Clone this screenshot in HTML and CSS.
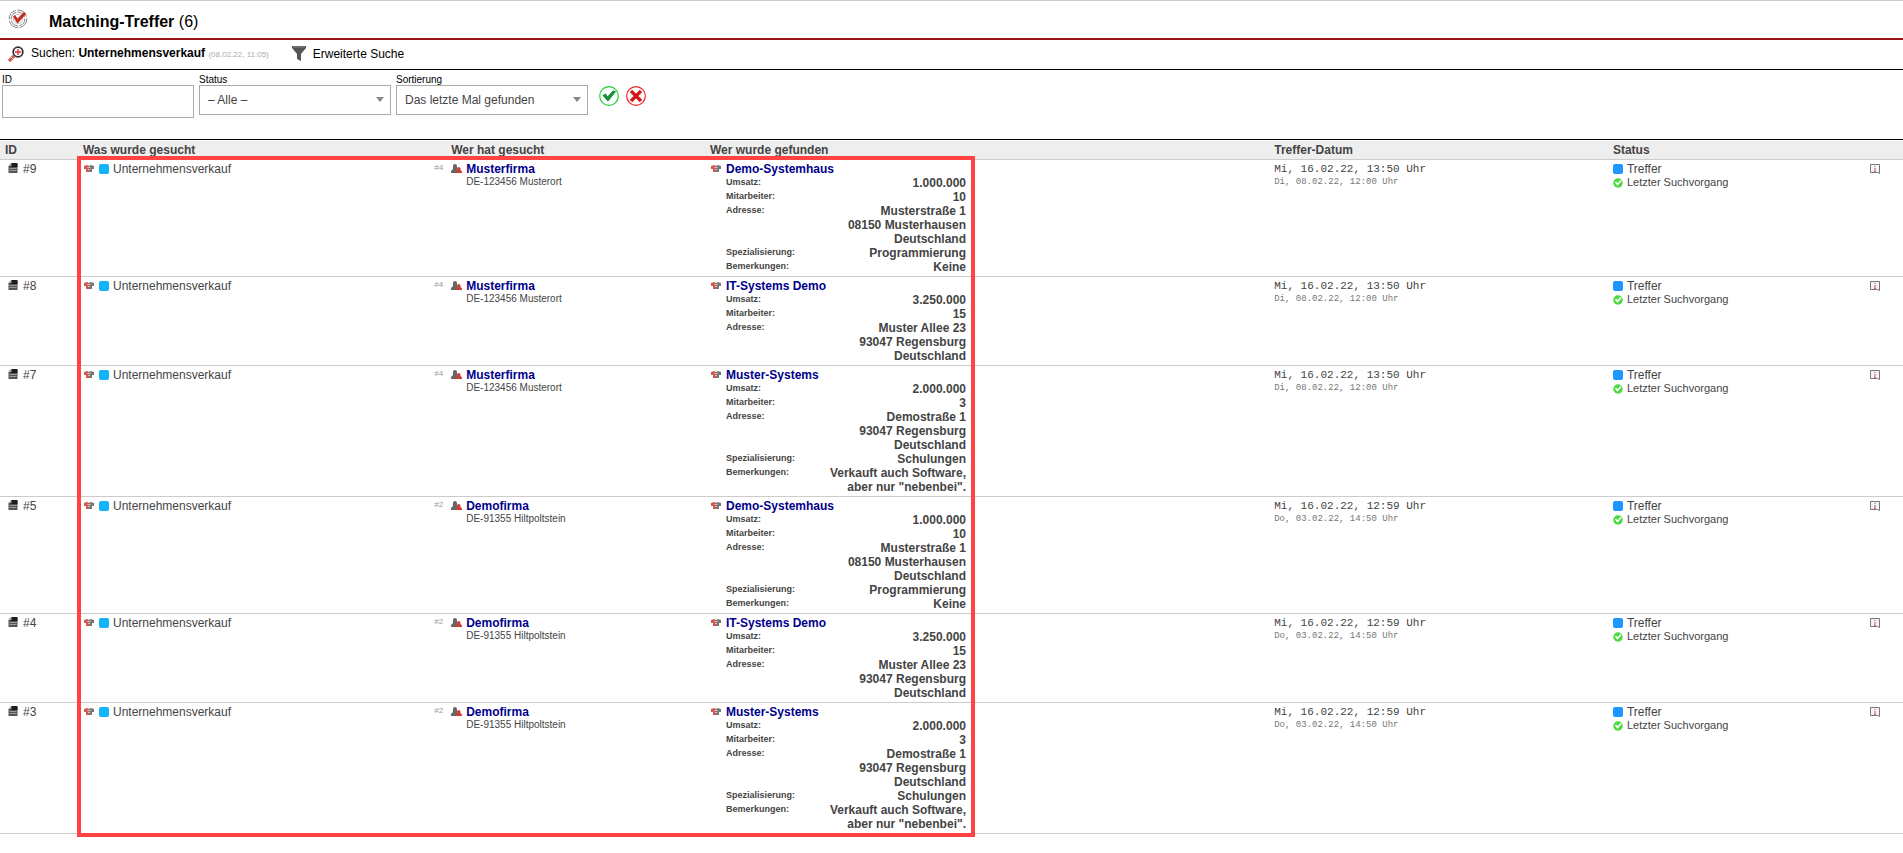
FILE: index.html
```html
<!DOCTYPE html>
<html lang="de">
<head>
<meta charset="utf-8">
<title>Matching-Treffer</title>
<link rel="stylesheet" href="styles.css">
</head>
<body>
<svg class="sprite" aria-hidden="true">
  <symbol id="doc" viewBox="0 0 9 10"><path d="M3 0h5q1 0 1 1v9H0V3z" fill="#555"/><path d="M3 0h5q1 0 1 1v3H2z" fill="#1c1c1c"/><path d="M0 3l3-3v3z" fill="#aaa"/><path d="M1 5.500h7M1 7.500h7" stroke="#999"/></symbol>
  <symbol id="shake" viewBox="0 0 10 8"><path d="M0 1l3-1 2 1v6H2V4H0z" fill="#cf5a50"/><path d="M5 1l2-1 3 1v3H8v3H5z" fill="#777"/><path d="M3.500 2.500h3M4 4.500h2" stroke="#ddd" stroke-width=".8"/></symbol>
  <symbol id="people" viewBox="0 0 11 10"><path d="M2 2q0-2 2-2t2 2v2q0 1 1 2v3H0V7l2-2z" fill="#666"/><path d="M6 4.500Q6 3 7.700 3t1.800 1.500V6L11 7.500V9H5V7.500L6.500 6z" fill="#d23d30"/></symbol>
  <symbol id="ok" viewBox="0 0 10 10"><circle cx="5" cy="5" r="4.700" fill="#4bd93f"/><path d="M2.500 4l2 2.500L8 2.500" fill="none" stroke="#fff" stroke-width="1.600"/></symbol>
  <symbol id="info" viewBox="0 0 10 10"><path d="M.500.500h9v9l-2-1h-7z" fill="#f4f4f4" stroke="#777"/><path d="M5 2v1M5 4v4M4 7.500h2" stroke="#d66" stroke-width="1.200"/></symbol>
</svg>

<header class="head">
  <svg class="logo" viewBox="0 0 20 20"><g fill="none" stroke="#777" stroke-width=".9"><circle cx="10" cy="10" r="8.800" stroke-dasharray="12 1.500"/><circle cx="10" cy="10" r="6.800" stroke-dasharray="9 1.500"/><circle cx="10" cy="10" r="4.500" stroke="#bbb"/></g><path d="M5 7.500l2-1.500 2.500 3.500L16 3l2 2-8 9H9z" fill="#c8281e"/></svg>
  <h1>Matching-Treffer <span>(6)</span></h1>
</header>

<nav class="tools">
  <a href="#" class="tool"><svg class="find" viewBox="0 0 16 16"><path d="M6 10l-5 5" stroke="#cf5a50" stroke-width="3.200"/><path d="M3 11l2 2" stroke="#fff" stroke-width=".7"/><circle cx="10" cy="6" r="4.800" fill="#fff" stroke="#333" stroke-width="1.800"/><path d="M10 3v6M7 6h6" stroke="#d33" stroke-width="1.400"/></svg><span>Suchen: <b>Unternehmensverkauf</b> <small>(08.02.22, 11:05)</small></span></a>
  <a href="#" class="tool"><svg class="funnel" viewBox="0 0 14 16"><path d="M0 0h14v2L9 8v7l-4-2V8L0 2z" fill="#555"/><path d="M1 1h12" stroke="#888"/></svg><span>Erweiterte Suche</span></a>
</nav>

<form class="filter">
  <div class="field"><label for="fid">ID</label><input id="fid" type="text"></div>
  <div class="field"><label for="fst">Status</label><div class="pick"><select id="fst"><option>– Alle –</option></select></div></div>
  <div class="field"><label for="fso">Sortierung</label><div class="pick"><select id="fso"><option>Das letzte Mal gefunden</option></select></div></div>
  <div class="actions">
    <button type="submit" aria-label="Anwenden"><svg viewBox="0 0 20 20"><circle cx="10" cy="10" r="9.300" fill="#fff" stroke="#2c3" stroke-width="1.200"/><path d="M4 9.500l2.500-1.500 2 3L14 5l2.500.500L9 15z" fill="#189038" stroke="#189038"/></svg></button>
    <button type="reset" aria-label="Zurücksetzen"><svg viewBox="0 0 20 20"><circle cx="10" cy="10" r="9.300" fill="#fff" stroke="#e22" stroke-width="1.200"/><path d="M5 5l10 10M15 5L5 15" stroke="#d4121a" stroke-width="3.200"/></svg></button>
  </div>
</form>

<main class="results">
<table>
  <colgroup><col class="c-id"><col class="c-what"><col class="c-who"><col class="c-found"><col class="c-date"><col class="c-status"><col></colgroup>
  <thead><tr><th>ID</th><th>Was wurde gesucht</th><th>Wer hat gesucht</th><th>Wer wurde gefunden</th><th>Treffer-Datum</th><th>Status</th><th></th></tr></thead>
  <tbody>
  <tr>
    <td class="id"><svg class="i-doc"><use href="#doc"/></svg>#9</td>
    <td><div class="what"><svg class="i-shake"><use href="#shake"/></svg><i class="sq cyan"></i>Unternehmensverkauf<span class="ref">#4</span></div></td>
    <td><div class="line"><svg class="i-people"><use href="#people"/></svg><a href="#">Musterfirma</a></div><div class="place">DE-123456 Musterort</div></td>
    <td><div class="line"><svg class="i-shake"><use href="#shake"/></svg><a href="#">Demo-Systemhaus</a></div>
      <dl><dt>Umsatz:</dt><dd>1.000.000</dd><dt>Mitarbeiter:</dt><dd>10</dd><dt>Adresse:</dt><dd>Musterstraße 1<br>08150 Musterhausen<br>Deutschland</dd><dt>Spezialisierung:</dt><dd>Programmierung</dd><dt>Bemerkungen:</dt><dd>Keine</dd></dl></td>
    <td class="date">Mi, 16.02.22, 13:50 Uhr<small>Di, 08.02.22, 12:00 Uhr</small></td>
    <td class="status"><div><i class="sq blue"></i>Treffer</div><div class="last"><svg class="i-ok"><use href="#ok"/></svg>Letzter Suchvorgang</div></td>
    <td class="more"><svg class="i-info"><use href="#info"/></svg></td>
  </tr>
  <tr>
    <td class="id"><svg class="i-doc"><use href="#doc"/></svg>#8</td>
    <td><div class="what"><svg class="i-shake"><use href="#shake"/></svg><i class="sq cyan"></i>Unternehmensverkauf<span class="ref">#4</span></div></td>
    <td><div class="line"><svg class="i-people"><use href="#people"/></svg><a href="#">Musterfirma</a></div><div class="place">DE-123456 Musterort</div></td>
    <td><div class="line"><svg class="i-shake"><use href="#shake"/></svg><a href="#">IT-Systems Demo</a></div>
      <dl><dt>Umsatz:</dt><dd>3.250.000</dd><dt>Mitarbeiter:</dt><dd>15</dd><dt>Adresse:</dt><dd>Muster Allee 23<br>93047 Regensburg<br>Deutschland</dd></dl></td>
    <td class="date">Mi, 16.02.22, 13:50 Uhr<small>Di, 08.02.22, 12:00 Uhr</small></td>
    <td class="status"><div><i class="sq blue"></i>Treffer</div><div class="last"><svg class="i-ok"><use href="#ok"/></svg>Letzter Suchvorgang</div></td>
    <td class="more"><svg class="i-info"><use href="#info"/></svg></td>
  </tr>
  <tr>
    <td class="id"><svg class="i-doc"><use href="#doc"/></svg>#7</td>
    <td><div class="what"><svg class="i-shake"><use href="#shake"/></svg><i class="sq cyan"></i>Unternehmensverkauf<span class="ref">#4</span></div></td>
    <td><div class="line"><svg class="i-people"><use href="#people"/></svg><a href="#">Musterfirma</a></div><div class="place">DE-123456 Musterort</div></td>
    <td><div class="line"><svg class="i-shake"><use href="#shake"/></svg><a href="#">Muster-Systems</a></div>
      <dl><dt>Umsatz:</dt><dd>2.000.000</dd><dt>Mitarbeiter:</dt><dd>3</dd><dt>Adresse:</dt><dd>Demostraße 1<br>93047 Regensburg<br>Deutschland</dd><dt>Spezialisierung:</dt><dd>Schulungen</dd><dt>Bemerkungen:</dt><dd>Verkauft auch Software,<br>aber nur "nebenbei".</dd></dl></td>
    <td class="date">Mi, 16.02.22, 13:50 Uhr<small>Di, 08.02.22, 12:00 Uhr</small></td>
    <td class="status"><div><i class="sq blue"></i>Treffer</div><div class="last"><svg class="i-ok"><use href="#ok"/></svg>Letzter Suchvorgang</div></td>
    <td class="more"><svg class="i-info"><use href="#info"/></svg></td>
  </tr>
  <tr>
    <td class="id"><svg class="i-doc"><use href="#doc"/></svg>#5</td>
    <td><div class="what"><svg class="i-shake"><use href="#shake"/></svg><i class="sq cyan"></i>Unternehmensverkauf<span class="ref">#2</span></div></td>
    <td><div class="line"><svg class="i-people"><use href="#people"/></svg><a href="#">Demofirma</a></div><div class="place">DE-91355 Hiltpoltstein</div></td>
    <td><div class="line"><svg class="i-shake"><use href="#shake"/></svg><a href="#">Demo-Systemhaus</a></div>
      <dl><dt>Umsatz:</dt><dd>1.000.000</dd><dt>Mitarbeiter:</dt><dd>10</dd><dt>Adresse:</dt><dd>Musterstraße 1<br>08150 Musterhausen<br>Deutschland</dd><dt>Spezialisierung:</dt><dd>Programmierung</dd><dt>Bemerkungen:</dt><dd>Keine</dd></dl></td>
    <td class="date">Mi, 16.02.22, 12:59 Uhr<small>Do, 03.02.22, 14:50 Uhr</small></td>
    <td class="status"><div><i class="sq blue"></i>Treffer</div><div class="last"><svg class="i-ok"><use href="#ok"/></svg>Letzter Suchvorgang</div></td>
    <td class="more"><svg class="i-info"><use href="#info"/></svg></td>
  </tr>
  <tr>
    <td class="id"><svg class="i-doc"><use href="#doc"/></svg>#4</td>
    <td><div class="what"><svg class="i-shake"><use href="#shake"/></svg><i class="sq cyan"></i>Unternehmensverkauf<span class="ref">#2</span></div></td>
    <td><div class="line"><svg class="i-people"><use href="#people"/></svg><a href="#">Demofirma</a></div><div class="place">DE-91355 Hiltpoltstein</div></td>
    <td><div class="line"><svg class="i-shake"><use href="#shake"/></svg><a href="#">IT-Systems Demo</a></div>
      <dl><dt>Umsatz:</dt><dd>3.250.000</dd><dt>Mitarbeiter:</dt><dd>15</dd><dt>Adresse:</dt><dd>Muster Allee 23<br>93047 Regensburg<br>Deutschland</dd></dl></td>
    <td class="date">Mi, 16.02.22, 12:59 Uhr<small>Do, 03.02.22, 14:50 Uhr</small></td>
    <td class="status"><div><i class="sq blue"></i>Treffer</div><div class="last"><svg class="i-ok"><use href="#ok"/></svg>Letzter Suchvorgang</div></td>
    <td class="more"><svg class="i-info"><use href="#info"/></svg></td>
  </tr>
  <tr>
    <td class="id"><svg class="i-doc"><use href="#doc"/></svg>#3</td>
    <td><div class="what"><svg class="i-shake"><use href="#shake"/></svg><i class="sq cyan"></i>Unternehmensverkauf<span class="ref">#2</span></div></td>
    <td><div class="line"><svg class="i-people"><use href="#people"/></svg><a href="#">Demofirma</a></div><div class="place">DE-91355 Hiltpoltstein</div></td>
    <td><div class="line"><svg class="i-shake"><use href="#shake"/></svg><a href="#">Muster-Systems</a></div>
      <dl><dt>Umsatz:</dt><dd>2.000.000</dd><dt>Mitarbeiter:</dt><dd>3</dd><dt>Adresse:</dt><dd>Demostraße 1<br>93047 Regensburg<br>Deutschland</dd><dt>Spezialisierung:</dt><dd>Schulungen</dd><dt>Bemerkungen:</dt><dd>Verkauft auch Software,<br>aber nur "nebenbei".</dd></dl></td>
    <td class="date">Mi, 16.02.22, 12:59 Uhr<small>Do, 03.02.22, 14:50 Uhr</small></td>
    <td class="status"><div><i class="sq blue"></i>Treffer</div><div class="last"><svg class="i-ok"><use href="#ok"/></svg>Letzter Suchvorgang</div></td>
    <td class="more"><svg class="i-info"><use href="#info"/></svg></td>
  </tr>
  </tbody>
</table>
<div class="marker"></div>
</main>
</body>
</html>
```
FILE: styles.css
```css
* { box-sizing: border-box; }
body {
  margin: 0;
  min-height: 100vh;
  border-top: 1px solid #ccc;
  background: #fff;
  color: #000;
  font: 12px/14px "Liberation Sans", Arial, sans-serif;
}
svg { display: block; flex: none; }
.sprite { display: none; }
a { color: inherit; text-decoration: none; }

.head {
  display: flex;
  align-items: center;
  gap: 21px;
  padding: 8px 8px 7px;
  border-bottom: 2px solid #991414;
}
.logo { width: 20px; height: 20px; align-self: flex-start; }
h1 { margin: 4px 0 0; font-size: 16px; line-height: 18px; }
h1 span { font-weight: normal; }

.tools {
  display: flex;
  gap: 23px;
  padding: 6px 8px 7px;
  border-bottom: 1px solid #000;
}
.tool { display: flex; align-items: center; gap: 7px; }
.tool small { font-size: 8px; color: #aaa; }
.find { width: 16px; height: 16px; }
.funnel { width: 14px; height: 16px; }

.filter { display: flex; gap: 5px; padding: 5px 2px 21px; }
.field { width: 192px; }
.field label { display: block; font-size: 10px; line-height: 10px; }
.field input {
  display: block;
  width: 100%;
  height: 33px;
  border: 1px solid #aaa;
}
.pick { position: relative; }
.pick select {
  display: block;
  width: 100%;
  height: 30px;
  padding: 0 8px;
  border: 1px solid #aaa;
  border-radius: 0;
  appearance: none;
  background: #fff;
  color: #444;
  font: inherit;
}
.pick::after {
  content: "";
  position: absolute;
  right: 7px;
  top: 12px;
  border: 4px solid transparent;
  border-top: 5px solid #888;
  border-bottom: 0;
}
.actions { display: flex; gap: 7px; padding: 11px 6px; }
.actions button { width: 20px; height: 20px; padding: 0; border: 0; background: none; }

.results { position: relative; border-top: 1px solid #000; padding-top: 1px; }
table { width: 100%; table-layout: fixed; border-collapse: collapse; color: #444; }
.c-id { width: 4.150%; }
.c-what { width: 19.350%; }
.c-who { width: 13.600%; }
.c-found { width: 29.650%; }
.c-date { width: 17.800%; }
.c-status { width: 13.500%; }
th { padding: 2px 4px; background: #eee; text-align: left; }
th:first-child { padding-left: 5px; }
td { padding: 2px 4px; vertical-align: top; }
thead tr, tbody tr { border-bottom: 1px solid #ccc; }
.what, .line, .status div { display: flex; align-items: center; line-height: 14px; }
.id svg { display: inline-block; margin: 0 5px 0 4px; }
.i-doc { width: 10px; height: 10px; }
.i-shake { width: 10px; height: 8px; margin: 0 5px 0 1px; }
.i-people { width: 11px; height: 10px; margin-right: 4px; }
.i-ok { width: 10px; height: 10px; margin-right: 4px; }
.i-info { width: 10px; height: 10px; }
.sq { width: 10px; height: 10px; margin-right: 4px; border-radius: 2px; }
.cyan { background: #14b4fa; }
.blue { background: #1e96ff; }
.ref { margin-left: auto; font-size: 8px; line-height: 12px; align-self: flex-start; color: #999; }
td a { color: #00008b; font-weight: bold; }
.place { padding-left: 15px; font-size: 10px; line-height: 12px; }
dl {
  display: grid;
  grid-template-columns: auto 1fr;
  width: 240px;
  margin: 0 0 0 16px;
  font-weight: bold;
}
dt { font-size: 9px; line-height: 12px; }
dd { margin: 0; text-align: right; }
.date { font: 11px/14px "Liberation Mono", monospace; }
.date small { display: block; font-size: 9px; line-height: 12px; color: #777; }
.status .last { font-size: 11px; line-height: 13px; }
.more { padding-top: 4px; }
.more svg { margin-left: auto; margin-right: 19px; }

.marker {
  position: absolute;
  left: 4.050%;
  top: 16px;
  bottom: -3px;
  width: 47.200%;
  border: 4px solid #ff4343;
  pointer-events: none;
}
```
